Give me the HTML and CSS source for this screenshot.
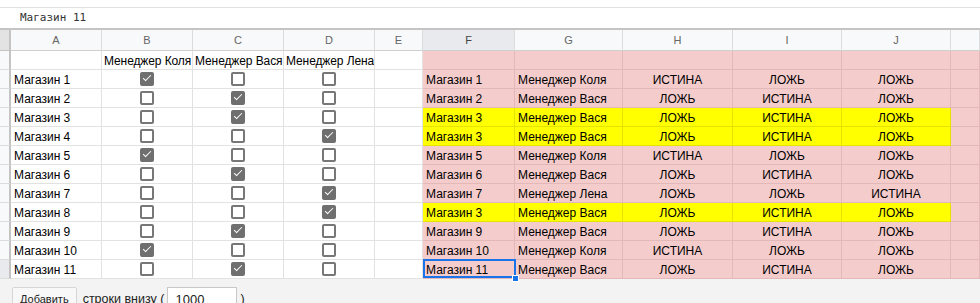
FILE: index.html
```html
<!DOCTYPE html>
<html lang="ru">
<head>
<meta charset="utf-8">
<title>Sheet</title>
<link rel="stylesheet" href="styles.css">
</head>
<body>
<div class="topstrip"></div>
<div class="fbar">Магазин 11</div>
<div class="freeze"></div>
<div class="grid">
  <div class="corner"></div>
  <div class="hd">A</div><div class="hd">B</div><div class="hd">C</div><div class="hd">D</div><div class="hd">E</div>
  <div class="hd act">F</div><div class="hd">G</div><div class="hd">H</div><div class="hd">I</div><div class="hd">J</div><div class="hd"></div>

  <div class="rh"></div><div class="c"></div><div class="c th">Менеджер Коля</div><div class="c th">Менеджер Вася</div><div class="c th">Менеджер Лена</div><div class="c"></div>
  <div class="c pk"></div><div class="c pk"></div><div class="c pk"></div><div class="c pk"></div><div class="c pk"></div><div class="c pk"></div>

  <div class="rh"></div><div class="c">Магазин 1</div><div class="c ck"><span class="cb on"></span></div><div class="c ck"><span class="cb"></span></div><div class="c ck"><span class="cb"></span></div><div class="c"></div>
  <div class="c pk">Магазин 1</div><div class="c pk">Менеджер Коля</div><div class="c pk ctr">ИСТИНА</div><div class="c pk ctr">ЛОЖЬ</div><div class="c pk ctr">ЛОЖЬ</div><div class="c pk"></div>

  <div class="rh"></div><div class="c">Магазин 2</div><div class="c ck"><span class="cb"></span></div><div class="c ck"><span class="cb on"></span></div><div class="c ck"><span class="cb"></span></div><div class="c"></div>
  <div class="c pk">Магазин 2</div><div class="c pk">Менеджер Вася</div><div class="c pk ctr">ЛОЖЬ</div><div class="c pk ctr">ИСТИНА</div><div class="c pk ctr">ЛОЖЬ</div><div class="c pk"></div>

  <div class="rh"></div><div class="c">Магазин 3</div><div class="c ck"><span class="cb"></span></div><div class="c ck"><span class="cb on"></span></div><div class="c ck"><span class="cb"></span></div><div class="c"></div>
  <div class="c yl">Магазин 3</div><div class="c yl">Менеджер Вася</div><div class="c yl ctr">ЛОЖЬ</div><div class="c yl ctr">ИСТИНА</div><div class="c yl ctr">ЛОЖЬ</div><div class="c pk"></div>

  <div class="rh"></div><div class="c">Магазин 4</div><div class="c ck"><span class="cb"></span></div><div class="c ck"><span class="cb"></span></div><div class="c ck"><span class="cb on"></span></div><div class="c"></div>
  <div class="c yl">Магазин 3</div><div class="c yl">Менеджер Вася</div><div class="c yl ctr">ЛОЖЬ</div><div class="c yl ctr">ИСТИНА</div><div class="c yl ctr">ЛОЖЬ</div><div class="c pk"></div>

  <div class="rh"></div><div class="c">Магазин 5</div><div class="c ck"><span class="cb on"></span></div><div class="c ck"><span class="cb"></span></div><div class="c ck"><span class="cb"></span></div><div class="c"></div>
  <div class="c pk">Магазин 5</div><div class="c pk">Менеджер Коля</div><div class="c pk ctr">ИСТИНА</div><div class="c pk ctr">ЛОЖЬ</div><div class="c pk ctr">ЛОЖЬ</div><div class="c pk"></div>

  <div class="rh"></div><div class="c">Магазин 6</div><div class="c ck"><span class="cb"></span></div><div class="c ck"><span class="cb on"></span></div><div class="c ck"><span class="cb"></span></div><div class="c"></div>
  <div class="c pk">Магазин 6</div><div class="c pk">Менеджер Вася</div><div class="c pk ctr">ЛОЖЬ</div><div class="c pk ctr">ИСТИНА</div><div class="c pk ctr">ЛОЖЬ</div><div class="c pk"></div>

  <div class="rh"></div><div class="c">Магазин 7</div><div class="c ck"><span class="cb"></span></div><div class="c ck"><span class="cb"></span></div><div class="c ck"><span class="cb on"></span></div><div class="c"></div>
  <div class="c pk">Магазин 7</div><div class="c pk">Менеджер Лена</div><div class="c pk ctr">ЛОЖЬ</div><div class="c pk ctr">ЛОЖЬ</div><div class="c pk ctr">ИСТИНА</div><div class="c pk"></div>

  <div class="rh"></div><div class="c">Магазин 8</div><div class="c ck"><span class="cb"></span></div><div class="c ck"><span class="cb"></span></div><div class="c ck"><span class="cb on"></span></div><div class="c"></div>
  <div class="c yl">Магазин 3</div><div class="c yl">Менеджер Вася</div><div class="c yl ctr">ЛОЖЬ</div><div class="c yl ctr">ИСТИНА</div><div class="c yl ctr">ЛОЖЬ</div><div class="c pk"></div>

  <div class="rh"></div><div class="c">Магазин 9</div><div class="c ck"><span class="cb"></span></div><div class="c ck"><span class="cb on"></span></div><div class="c ck"><span class="cb"></span></div><div class="c"></div>
  <div class="c pk">Магазин 9</div><div class="c pk">Менеджер Вася</div><div class="c pk ctr">ЛОЖЬ</div><div class="c pk ctr">ИСТИНА</div><div class="c pk ctr">ЛОЖЬ</div><div class="c pk"></div>

  <div class="rh"></div><div class="c">Магазин 10</div><div class="c ck"><span class="cb on"></span></div><div class="c ck"><span class="cb"></span></div><div class="c ck"><span class="cb"></span></div><div class="c"></div>
  <div class="c pk">Магазин 10</div><div class="c pk">Менеджер Коля</div><div class="c pk ctr">ИСТИНА</div><div class="c pk ctr">ЛОЖЬ</div><div class="c pk ctr">ЛОЖЬ</div><div class="c pk"></div>

  <div class="rh act"></div><div class="c">Магазин 11</div><div class="c ck"><span class="cb"></span></div><div class="c ck"><span class="cb on"></span></div><div class="c ck"><span class="cb"></span></div><div class="c"></div>
  <div class="c pk sel">Магазин 11</div><div class="c pk">Менеджер Вася</div><div class="c pk ctr">ЛОЖЬ</div><div class="c pk ctr">ИСТИНА</div><div class="c pk ctr">ЛОЖЬ</div><div class="c pk"></div>
</div>
<div class="footer">
  <button class="btn" type="button">Добавить</button>
  <span class="lbl">строки внизу (</span>
  <input class="inp" type="text" value="1000">
  <span class="lbl">)</span>
</div>
</body>
</html>
```

FILE: styles.css
```css
html, body {
  margin: 0;
  padding: 0;
  background: #f3f3f3;
}
body {
  width: 980px;
  height: 303px;
  overflow: hidden;
  font-family: "Liberation Sans", Arial, sans-serif;
  font-size: 12px;
  color: #000;
}
.topstrip {
  height: 7px;
  background: #fff;
  border-bottom: 1px solid #e1e1e1;
}
.fbar {
  height: 20px;
  line-height: 19px;
  padding-left: 20px;
  background: #fff;
  font-family: "DejaVu Sans Mono", monospace;
  font-size: 11px;
  color: #333;
}
.freeze {
  height: 2px;
  background: #c4c4c4;
}
.grid {
  display: grid;
  grid-template-columns: 11px 91px 91px 91px 91px 48px 92px 108px 110px 109px 109px 1fr;
  grid-template-rows: 21px;
  grid-auto-rows: 19px;
  background: #fff;
}
.grid > div {
  box-sizing: border-box;
}
.corner {
  background: #e3e3e3;
  border-right: 2px solid #c4c4c4;
  border-bottom: 1px solid #c4c4c4;
}
.hd {
  background: #f8f9fa;
  border-right: 1px solid #dcdcdc;
  border-bottom: 1px solid #cfcfcf;
  color: #666;
  font-size: 11px;
  text-align: center;
  line-height: 21px;
}
.hd.act {
  background: #e8eaed;
  color: #444;
}
.rh {
  background: #f8f9fa;
  border-right: 2px solid #c4c4c4;
  border-bottom: 1px solid #dcdcdc;
}
.rh.act {
  background: #e8eaed;
}
.c {
  border-right: 1px solid #e2e2e2;
  border-bottom: 1px solid #e2e2e2;
  padding: 2px 3px 0;
  line-height: 17px;
  font-size: 12px;
  white-space: nowrap;
  overflow: hidden;
}
.c.th {
  padding: 2px 2px 0;
  letter-spacing: -0.1px;
}
.pk {
  background: #f4cccc;
  border-right-color: #e2b8b8;
  border-bottom-color: #e2b8b8;
}
.yl {
  background: #ffff00;
  border-right-color: #e4e400;
  border-bottom-color: #e4e400;
}
.ctr {
  text-align: center;
}
.ck {
  display: flex;
  align-items: center;
  justify-content: center;
  padding: 0;
}
.cb {
  display: block;
  width: 14px;
  height: 14px;
  box-sizing: border-box;
  border: 2px solid #777;
  border-radius: 2px;
  position: relative;
}
.cb.on {
  background: #6f6f6f;
  border-color: #6f6f6f;
}
.cb.on::after {
  content: "";
  position: absolute;
  left: 1px;
  top: 1px;
  width: 7px;
  height: 3px;
  border-left: 1.7px solid #fff;
  border-bottom: 1.7px solid #fff;
  transform: rotate(-45deg);
}
.sel {
  position: relative;
  overflow: visible;
}
.sel::before {
  content: "";
  position: absolute;
  left: 0;
  top: -1px;
  right: -2px;
  bottom: 0;
  border: 2px solid #1a73e8;
  z-index: 2;
}
.sel::after {
  content: "";
  position: absolute;
  right: -5px;
  bottom: -4px;
  width: 5px;
  height: 5px;
  background: #1a73e8;
  border: 1px solid #fff;
  z-index: 3;
}
.footer {
  display: flex;
  align-items: center;
  padding: 8px 12px 0;
}
.btn {
  height: 24px;
  padding: 0 7px;
  margin-right: 6px;
  background: #f8f8f8;
  border: 1px solid #d6d6d6;
  border-radius: 2px;
  font-family: "Liberation Sans", Arial, sans-serif;
  font-size: 11px;
  color: #222;
}
.lbl {
  font-size: 12.5px;
  color: #222;
}
.inp {
  width: 70px;
  height: 24px;
  box-sizing: border-box;
  padding: 0 7px;
  margin: 0 3px;
  border: 1px solid #c8c8c8;
  background: #fff;
  font-family: "Liberation Sans", Arial, sans-serif;
  font-size: 13px;
  color: #222;
}
```
